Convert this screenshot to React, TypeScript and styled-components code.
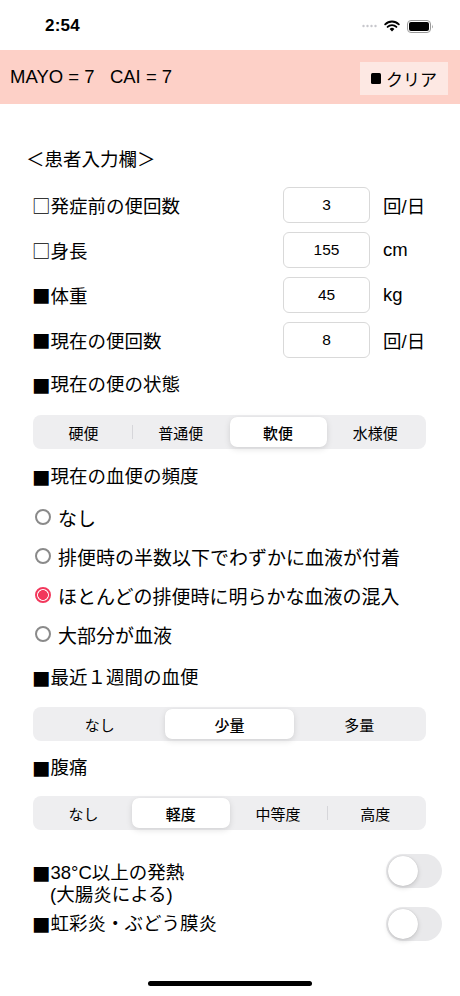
import React, { useState } from "react";
import styled, { createGlobalStyle, css } from "styled-components";

const Global = createGlobalStyle`
  html, body { margin: 0; padding: 0; background: #fff; }
  body { font-family: "Liberation Sans", "Noto Sans CJK JP", sans-serif; color: #000; }
  * { box-sizing: border-box; }
`;

const Screen = styled.div`
  width: 460px;
  height: 996px;
  display: flex;
  flex-direction: column;
  overflow: hidden;
  background: #fff;
`;

const StatusBar = styled.div`
  height: 50px;
  display: flex;
  align-items: center;
  justify-content: space-between;
  padding: 0 26px 0 45px;
`;

const Time = styled.span`
  font-family: "Liberation Sans", sans-serif;
  font-weight: 700;
  font-size: 17px;
  letter-spacing: 0.2px;
  margin-top: 2px;
`;

const StatusIcons = styled.div`
  display: flex;
  align-items: center;
  gap: 7px;
  margin-top: 2px;
`;

const Header = styled.div`
  height: 54px;
  background: #fdd0c7;
  display: flex;
  align-items: center;
  justify-content: space-between;
  padding: 0 12px 0 10px;
`;

const Score = styled.span`
  font-size: 18.5px;
  white-space: pre;
`;

const ClearButton = styled.button`
  width: 88px;
  height: 33px;
  border: none;
  background: #fde8e3;
  font-family: "Liberation Sans", "Noto Sans CJK JP", sans-serif;
  font-size: 17px;
  color: #000;
  display: flex;
  align-items: center;
  justify-content: center;
  gap: 5px;
  padding: 0;
  margin-top: 2px;
`;

const ButtonMark = styled.span`
  width: 10px;
  height: 11px;
  border-radius: 1.5px;
  background: #000;
  flex: none;
`;

const Mark = styled.span`
  font-family: "Noto Sans CJK JP", sans-serif;
  font-size: 1em;
`;

const Content = styled.div`
  display: flex;
  flex-direction: column;
  padding: 44px 34px 0 33px;
`;

const Title = styled.div`
  font-size: 18.5px;
  height: 24px;
  line-height: 24px;
  margin-left: -7px;
`;

const Label = styled.div<{ $mt?: number }>`
  font-size: 18.5px;
  height: 24px;
  line-height: 24px;
  display: flex;
  align-items: center;
  margin-top: ${(p) => p.$mt ?? 0}px;
  margin-left: -1px;
`;

const FieldRow = styled.div<{ $mt: number }>`
  display: flex;
  align-items: center;
  height: 36px;
  margin-top: ${(p) => p.$mt}px;
`;

const FieldLabel = styled.span`
  font-size: 18.5px;
  flex: 1;
  margin-left: -1px;
`;

const NumberBox = styled.div`
  width: 87px;
  height: 36px;
  border: 1px solid #d9d9d9;
  border-radius: 6px;
  display: flex;
  align-items: center;
  justify-content: center;
  font-size: 15.5px;
`;

const Unit = styled.span`
  width: 43px;
  margin-left: 13px;
  font-size: 18.5px;
`;

const Segmented = styled.div<{ $mt: number; $n: number }>`
  margin-top: ${(p) => p.$mt}px;
  width: 393px;
  height: 34px;
  border-radius: 8px;
  background: #eeeef0;
  display: grid;
  grid-template-columns: repeat(${(p) => p.$n}, 1fr);
  padding: 2px;
`;

const Segment = styled.div<{ $active: boolean; $divider: boolean }>`
  position: relative;
  display: flex;
  align-items: center;
  justify-content: center;
  font-size: 15px;
  border-radius: 7px;
  ${(p) =>
    p.$active &&
    css`
      background: #fff;
      font-weight: 500;
      box-shadow: 0 2px 6px rgba(0, 0, 0, 0.12), 0 0 1px rgba(0, 0, 0, 0.06);
    `}
  ${(p) =>
    p.$divider &&
    css`
      &::before {
        content: "";
        position: absolute;
        left: 0;
        top: 8px;
        bottom: 8px;
        width: 1px;
        background: #d6d6da;
      }
    `}
`;

const RadioRow = styled.div<{ $mt: number }>`
  display: flex;
  align-items: center;
  height: 24px;
  margin-top: ${(p) => p.$mt}px;
  font-size: 19px;
  gap: 7px;
  padding-left: 2px;
`;

const RadioCircle = styled.span<{ $on: boolean }>`
  width: 16px;
  height: 16px;
  border-radius: 50%;
  flex: none;
  ${(p) =>
    p.$on
      ? css`
          border: 2px solid #f2385c;
          background: radial-gradient(circle, #f2385c 0 4.6px, #fff 5.2px);
        `
      : css`
          border: 2px solid #8a8a8a;
          background: #fff;
        `}
`;

const ToggleRow = styled.div<{ $mt: number; $align: string }>`
  display: flex;
  justify-content: space-between;
  align-items: ${(p) => p.$align};
  margin-top: ${(p) => p.$mt}px;
  margin-right: -16px;
`;

const ToggleLabel = styled.div<{ $pt: number }>`
  font-size: 18.5px;
  line-height: 22px;
  padding-top: ${(p) => p.$pt}px;
  margin-left: -1px;
`;

const LabelLine = styled.div<{ $indent?: boolean }>`
  height: 22px;
  display: flex;
  align-items: center;
  padding-left: ${(p) => (p.$indent ? 18 : 0)}px;
`;

const Toggle = styled.div`
  width: 56px;
  height: 34px;
  border-radius: 17px;
  background: #e9e9eb;
  padding: 2px;
  flex: none;
`;

const Knob = styled.div`
  width: 30px;
  height: 30px;
  border-radius: 50%;
  background: #fff;
  box-shadow: 0 2px 5px rgba(0, 0, 0, 0.15), 0 0 1px rgba(0, 0, 0, 0.2);
`;

const HomeBar = styled.div`
  margin: auto auto 10px;
  width: 164px;
  height: 5px;
  border-radius: 3px;
  background: #000;
`;

function Seg({ items, active, mt }: { items: string[]; active: number; mt: number }) {
  return (
    <Segmented $mt={mt} $n={items.length}>
      {items.map((it, i) => (
        <Segment
          key={it + i}
          $active={i === active}
          $divider={i > 0 && i !== active && i - 1 !== active}
        >
          {it}
        </Segment>
      ))}
    </Segmented>
  );
}

export default function App() {
  const [stool] = useState(2);
  const fields = [
    { mark: "□", label: "発症前の便回数", value: "3", unit: "回/日" },
    { mark: "□", label: "身長", value: "155", unit: "cm" },
    { mark: "■", label: "体重", value: "45", unit: "kg" },
    { mark: "■", label: "現在の便回数", value: "8", unit: "回/日" },
  ];
  const radios = [
    "なし",
    "排便時の半数以下でわずかに血液が付着",
    "ほとんどの排便時に明らかな血液の混入",
    "大部分が血液",
  ];
  return (
    <Screen>
      <Global />
      <StatusBar>
        <Time>2:54</Time>
        <StatusIcons>
          <svg width="15" height="4" viewBox="0 0 15 4">
            {[0, 4, 8, 12].map((x) => (
              <circle key={x} cx={x + 1.5} cy="2" r="1.2" fill="#c7c7cc" />
            ))}
          </svg>
          <svg width="16" height="12" viewBox="0 0 16 12">
            <path d="M8 11.5 L5.6 8.9 A3.4 3.4 0 0 1 10.4 8.9 Z" fill="#000" />
            <path d="M3.6 6.9 A6.3 6.3 0 0 1 12.4 6.9" stroke="#000" strokeWidth="1.9" fill="none" strokeLinecap="round" />
            <path d="M1.2 4.3 A9.6 9.6 0 0 1 14.8 4.3" stroke="#000" strokeWidth="1.9" fill="none" strokeLinecap="round" />
          </svg>
          <svg width="27" height="13" viewBox="0 0 27 13">
            <rect x="0.5" y="0.5" width="23" height="12" rx="3.5" fill="none" stroke="#999" />
            <rect x="2" y="2" width="20" height="9" rx="2" fill="#000" />
            <path d="M25 4.5 Q26.5 6.5 25 8.5 Z" fill="#999" />
          </svg>
        </StatusIcons>
      </StatusBar>
      <Header>
        <Score>{"MAYO = 7   CAI = 7"}</Score>
        <ClearButton>
          <ButtonMark />
          <span>クリア</span>
        </ClearButton>
      </Header>
      <Content>
        <Title>＜患者入力欄＞</Title>
        {fields.map((f, i) => (
          <FieldRow key={f.label} $mt={i === 0 ? 15 : 9}>
            <FieldLabel>
              <Mark>{f.mark}</Mark>
              {f.label}
            </FieldLabel>
            <NumberBox>{f.value}</NumberBox>
            <Unit>{f.unit}</Unit>
          </FieldRow>
        ))}
        <Label $mt={15}>
          <Mark>■</Mark>現在の便の状態
        </Label>
        <Seg items={["硬便", "普通便", "軟便", "水様便"]} active={stool} mt={18} />
        <Label $mt={16}>
          <Mark>■</Mark>現在の血便の頻度
        </Label>
        {radios.map((r, i) => (
          <RadioRow key={r} $mt={i === 0 ? 16 : 15}>
            <RadioCircle $on={i === 2} />
            {r}
          </RadioRow>
        ))}
        <Label $mt={20}>
          <Mark>■</Mark>最近１週間の血便
        </Label>
        <Seg items={["なし", "少量", "多量"]} active={1} mt={17} />
        <Label $mt={15}>
          <Mark>■</Mark>腹痛
        </Label>
        <Seg items={["なし", "軽度", "中等度", "高度"]} active={1} mt={16} />
        <ToggleRow $mt={24} $align="flex-start">
          <ToggleLabel $pt={8}>
            <LabelLine>
              <Mark>■</Mark>38°C以上の発熱
            </LabelLine>
            <LabelLine $indent>(大腸炎による)</LabelLine>
          </ToggleLabel>
          <Toggle>
            <Knob />
          </Toggle>
        </ToggleRow>
        <ToggleRow $mt={1} $align="center">
          <ToggleLabel $pt={0}>
            <LabelLine>
              <Mark>■</Mark>虹彩炎・ぶどう膜炎
            </LabelLine>
          </ToggleLabel>
          <Toggle>
            <Knob />
          </Toggle>
        </ToggleRow>
      </Content>
      <HomeBar />
    </Screen>
  );
}
